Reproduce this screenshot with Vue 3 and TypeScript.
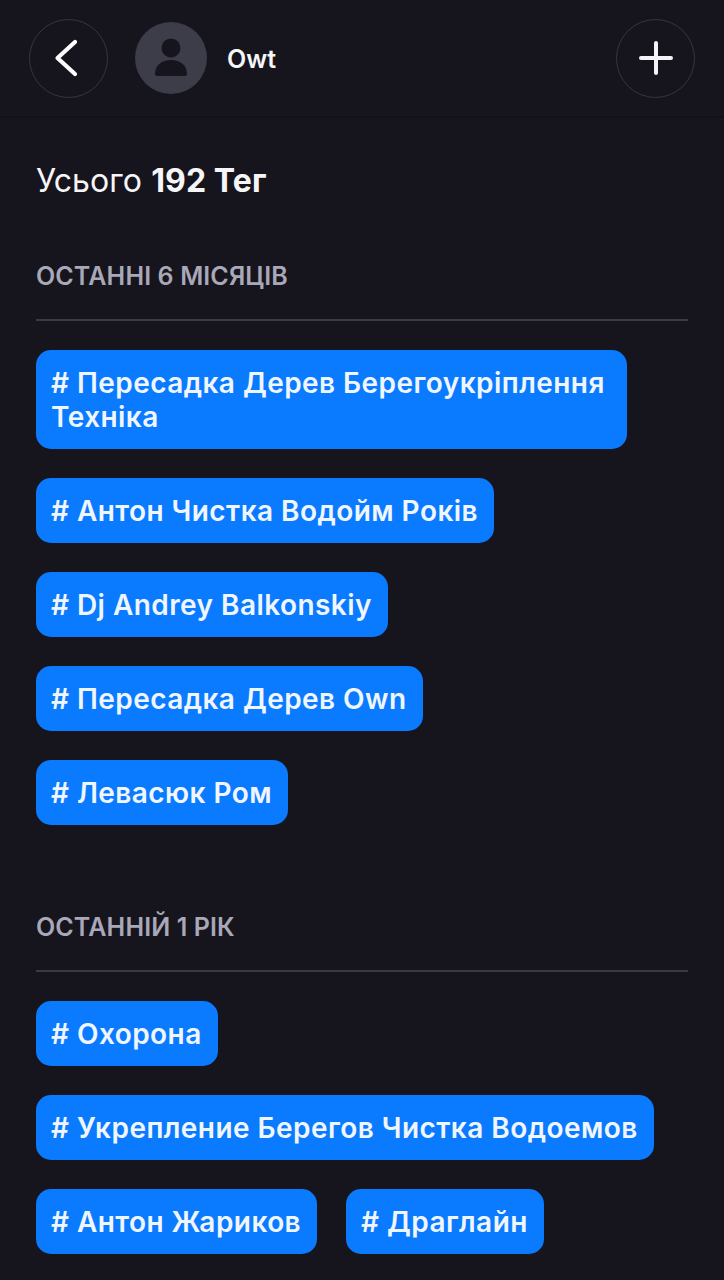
<template>
  <div class="page">
    <header class="topbar">
      <button class="round-btn">
        <svg width="24" height="38" viewBox="0 0 24 38" fill="none">
          <path d="M21 3 L3.500 19 L21 35" stroke="#fff" stroke-width="4.200" stroke-linecap="round" stroke-linejoin="round" />
        </svg>
      </button>
      <div class="avatar">
        <svg width="36" height="40" viewBox="0 0 36 40" fill="#16151d">
          <circle cx="18" cy="10" r="9.500" />
          <path d="M2 36c0-9 7-14 16-14s16 5 16 14c0 1.200-.8 2-2 2H4c-1.200 0-2-.8-2-2z" />
        </svg>
      </div>
      <span class="username">Owt</span>
      <button class="round-btn plus">
        <svg width="34" height="34" viewBox="0 0 34 34" fill="none">
          <path d="M17 2v30M2 17h30" stroke="#f4f4f6" stroke-width="4" stroke-linecap="round" />
        </svg>
      </button>
    </header>

    <main class="content">
      <div class="total">Усього <b>192 Тег</b></div>

      <section v-for="group in groups" :key="group.title" class="group">
        <h2 class="group-title">{{ group.title }}</h2>
        <div class="tags">
          <span v-for="tag in group.tags" :key="tag" class="tag" :class="{ long: tag.length > 36 }"># {{ tag }}</span>
        </div>
      </section>
    </main>
  </div>
</template>

<script setup lang="ts">
interface TagGroup {
  title: string
  tags: string[]
}

const groups: TagGroup[] = [
  {
    title: 'ОСТАННІ 6 МІСЯЦІВ',
    tags: [
      'Пересадка Дерев Берегоукріплення Техніка',
      'Антон Чистка Водойм Років',
      'Dj Andrey Balkonskiy',
      'Пересадка Дерев Own',
      'Левасюк Ром',
    ],
  },
  {
    title: 'ОСТАННІЙ 1 РІК',
    tags: ['Охорона', 'Укрепление Берегов Чистка Водоемов', 'Антон Жариков', 'Драглайн'],
  },
]
</script>

<style>
html,
body {
  margin: 0;
  background: #16151d;
  overflow: hidden;
}
</style>

<style scoped>
.page {
  width: 724px;
  height: 1280px;
  overflow: hidden;
  background: #16151d;
  font-family: Inter, "Noto Sans", sans-serif;
  color: #fff;
}

.topbar {
  height: 118px;
  box-sizing: border-box;
  display: flex;
  align-items: center;
  padding: 0 29px;
  border-bottom: 2px solid #121118;
}

.round-btn {
  width: 79px;
  height: 79px;
  box-sizing: border-box;
  flex: none;
  display: flex;
  align-items: center;
  justify-content: center;
  padding: 0 6px 0 0;
  background: none;
  border: 1.5px solid #37363e;
  border-radius: 50%;
}

.plus {
  padding: 0;
  margin-left: auto;
}

.avatar {
  width: 72px;
  height: 72px;
  margin-left: 27px;
  flex: none;
  display: flex;
  align-items: center;
  justify-content: center;
  background: #3d3c49;
  border-radius: 50%;
}

.username {
  margin-left: 20px;
  font-size: 25px;
  font-weight: 600;
  padding-top: 2px;
  color: #f6f6f8;
}

.content {
  padding: 44px 36px 0;
}

.total {
  font-size: 32px;
  line-height: 38px;
  letter-spacing: 0.08px;
  color: #f6f6f8;
}

.total b {
  font-weight: 700;
}

.group {
  margin-top: 61px;
}

.group + .group {
  margin-top: 87px;
}

.group-title {
  margin: 0;
  padding-bottom: 28px;
  font-size: 25px;
  line-height: 30px;
  font-weight: 600;
  letter-spacing: 0.12px;
  color: #a9a8b8;
  border-bottom: 2px solid #3a3945;
}

.tags {
  display: flex;
  flex-wrap: wrap;
  gap: 29px;
  padding-top: 29px;
}

.tag {
  box-sizing: border-box;
  padding: 16px 16px 15px 15px;
  font-size: 28px;
  line-height: 34px;
  font-weight: 600;
  letter-spacing: 0.44px;
  color: #f0f6ff;
  background: #0a7aff;
  border-radius: 15px;
}

.tag.long {
  max-width: 591px;
}
</style>
